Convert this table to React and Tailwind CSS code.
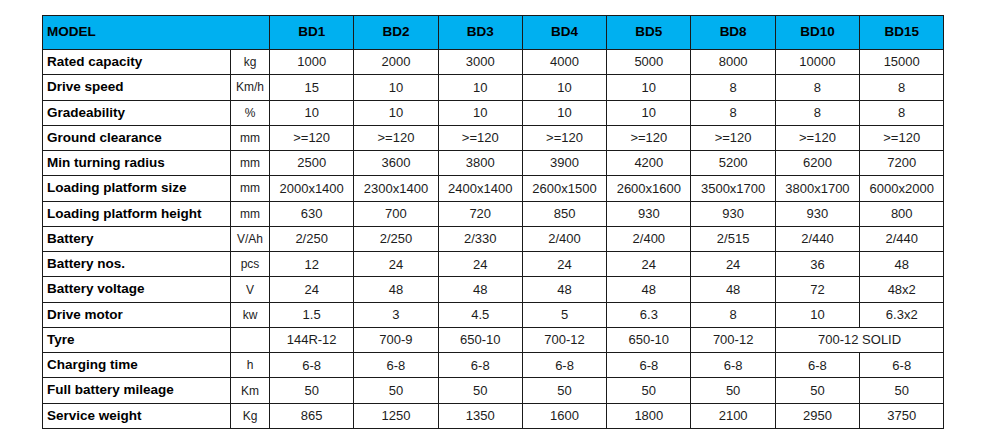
const models = ['BD1', 'BD2', 'BD3', 'BD4', 'BD5', 'BD8', 'BD10', 'BD15'];

const rows = [
	['Rated capacity', 'kg', ['1000', '2000', '3000', '4000', '5000', '8000', '10000', '15000']],
	['Drive speed', 'Km/h', ['15', '10', '10', '10', '10', '8', '8', '8']],
	['Gradeability', '%', ['10', '10', '10', '10', '10', '8', '8', '8']],
	['Ground clearance', 'mm', ['>=120', '>=120', '>=120', '>=120', '>=120', '>=120', '>=120', '>=120']],
	['Min turning radius', 'mm', ['2500', '3600', '3800', '3900', '4200', '5200', '6200', '7200']],
	['Loading platform size', 'mm', ['2000x1400', '2300x1400', '2400x1400', '2600x1500', '2600x1600', '3500x1700', '3800x1700', '6000x2000']],
	['Loading platform height', 'mm', ['630', '700', '720', '850', '930', '930', '930', '800']],
	['Battery', 'V/Ah', ['2/250', '2/250', '2/330', '2/400', '2/400', '2/515', '2/440', '2/440']],
	['Battery nos.', 'pcs', ['12', '24', '24', '24', '24', '24', '36', '48']],
	['Battery voltage', 'V', ['24', '48', '48', '48', '48', '48', '72', '48x2']],
	['Drive motor', 'kw', ['1.5', '3', '4.5', '5', '6.3', '8', '10', '6.3x2']],
	['Tyre', '', ['144R-12', '700-9', '650-10', '700-12', '650-10', '700-12', '700-12 SOLID']],
	['Charging time', 'h', ['6-8', '6-8', '6-8', '6-8', '6-8', '6-8', '6-8', '6-8']],
	['Full battery mileage', 'Km', ['50', '50', '50', '50', '50', '50', '50', '50']],
	['Service weight', 'Kg', ['865', '1250', '1350', '1600', '1800', '2100', '2950', '3750']],
];

const cell = 'border border-[#1a1a1a] p-0';

const App = () => {
	return (
		<div className="w-[990px] h-[447px] bg-white pt-[15px] pl-[42px] font-['Liberation_Sans',Arial,sans-serif]">
			<table className="border-collapse table-fixed w-[902px] text-[#1c1c1c]">
				<colgroup>
					<col className="w-[188px]" />
					<col className="w-[39px]" />
					{models.map(m => (
						<col key={m} className="w-[84.3px]" />
					))}
				</colgroup>
				<thead>
					<tr className="h-[34px] bg-[#00b0f0]">
						<th colSpan={2} className={`${cell} text-left pl-[4px] text-[13.5px] font-bold text-black`}>
							MODEL
						</th>
						{models.map(m => (
							<th key={m} className={`${cell} text-center text-[13.5px] font-bold text-black`}>
								{m}
							</th>
						))}
					</tr>
				</thead>
				<tbody>
					{rows.map(([label, unit, values]) => (
						<tr key={label} className="h-[25.27px]">
							<td className={`${cell} text-left pl-[4px] text-[13.5px] font-bold text-black`}>
								{label}
							</td>
							<td className={`${cell} text-center text-[12px]`}>{unit}</td>
							{values.map((v, i) => (
								<td
									key={i}
									colSpan={values.length === 7 && i === 6 ? 2 : 1}
									className={`${cell} text-center text-[13px]`}
								>
									{v}
								</td>
							))}
						</tr>
					))}
				</tbody>
			</table>
		</div>
	);
}

export default App;
